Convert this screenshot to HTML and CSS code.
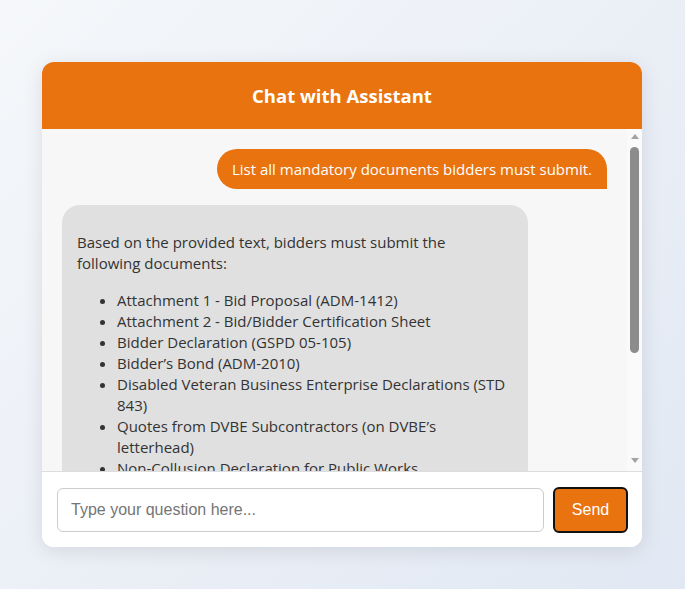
FILE: index.html
```html
<!DOCTYPE html>
<html lang="en">
<head>
<meta charset="utf-8">
<title>Chat with Assistant</title>
<link rel="stylesheet" href="styles.css">
</head>
<body>
<div class="chat">
  <div class="chat-header">Chat with Assistant</div>
  <div class="messages-wrap">
    <div class="messages">
      <div class="msg user">List all mandatory documents bidders must submit.</div>
      <div class="msg bot">
        <p>Based on the provided text, bidders must submit the following documents:</p>
        <ul>
          <li>Attachment 1 - Bid Proposal (ADM-1412)</li>
          <li>Attachment 2 - Bid/Bidder Certification Sheet</li>
          <li>Bidder Declaration (GSPD 05-105)</li>
          <li>Bidder’s Bond (ADM-2010)</li>
          <li>Disabled Veteran Business Enterprise Declarations (STD 843)</li>
          <li>Quotes from DVBE Subcontractors (on DVBE’s letterhead)</li>
          <li>Non-Collusion Declaration for Public Works</li>
          <li>Payee Data Record (STD 204)</li>
          <li>Small Business Certification (if applicable)</li>
        </ul>
      </div>
    </div>
    <div class="scrollbar">
      <span class="arrow up"></span>
      <span class="thumb"></span>
      <span class="arrow down"></span>
    </div>
  </div>
  <div class="input-bar">
    <input class="question" type="text" placeholder="Type your question here...">
    <button class="send">Send</button>
  </div>
</div>
</body>
</html>
```

FILE: styles.css
```css
html, body {
  height: 100%;
}
body {
  margin: 0;
  box-sizing: border-box;
  padding: 62px 0 0 42px;
  background: linear-gradient(135deg, #f5f7fa 0%, #e1e8f3 100%);
  font-family: "Open Sans", "Noto Sans", sans-serif;
}
.chat {
  width: 600px;
  height: 485px;
  background: #ffffff;
  border-radius: 12px;
  box-shadow: 0 4px 20px rgba(0, 0, 0, 0.1);
  display: flex;
  flex-direction: column;
  overflow: hidden;
}
.chat-header {
  background: #e8730f;
  color: #ffffff;
  height: 67px;
  display: flex;
  align-items: center;
  justify-content: center;
  font-size: 18.5px;
  font-weight: 700;
  flex: none;
}
.messages-wrap {
  flex: 1;
  min-height: 0;
  display: flex;
  background: #f7f7f7;
}
.messages {
  flex: 1;
  min-width: 0;
  overflow: hidden;
  padding: 20px;
  display: flex;
  flex-direction: column;
  gap: 16px;
}
.msg {
  font-size: 15px;
  line-height: 21px;
  color: #333333;
  flex: none;
}
.user {
  align-self: flex-end;
  background: #e8730f;
  color: #ffffff;
  padding: 10px 15px 9px;
  border-radius: 20px 20px 0 20px;
}
.bot {
  align-self: flex-start;
  width: 436px;
  background: #e0e0e0;
  padding: 12px 15px;
  border-radius: 18px 18px 18px 0;
}
.bot p {
  margin: 15px 0 16px;
  padding-right: 10px;
}
.bot ul {
  margin: 16px 0 15px;
  padding-left: 40px;
}
.scrollbar {
  flex: none;
  width: 15px;
  background: #fafafa;
  display: flex;
  flex-direction: column;
  align-items: center;
  padding: 5px 0 8px;
  box-sizing: border-box;
}
.arrow {
  width: 0;
  height: 0;
  border-left: 4px solid transparent;
  border-right: 4px solid transparent;
}
.arrow.up {
  border-bottom: 5px solid #a3a3a3;
}
.arrow.down {
  margin-top: auto;
  border-top: 5px solid #a3a3a3;
}
.thumb {
  margin-top: 8px;
  width: 9px;
  height: 206px;
  border-radius: 5px;
  background: #8c8c8c;
}
.input-bar {
  flex: none;
  display: flex;
  gap: 9px;
  align-items: center;
  padding: 15px 14px 14px 15px;
  border-top: 1px solid #dddddd;
  background: #ffffff;
}
.question {
  flex: 1;
  height: 44px;
  box-sizing: border-box;
  padding: 0 13px;
  border: 1px solid #cccccc;
  border-radius: 6px;
  font-family: "Liberation Sans", Arial, sans-serif;
  font-size: 16px;
  color: #333333;
}
.question::placeholder {
  color: #757575;
}
.send {
  width: 75px;
  height: 46px;
  box-sizing: border-box;
  background: #e8730f;
  color: #ffffff;
  border: 2px solid #111111;
  border-radius: 6px;
  font-family: "Liberation Sans", Arial, sans-serif;
  font-size: 16px;
}
```
